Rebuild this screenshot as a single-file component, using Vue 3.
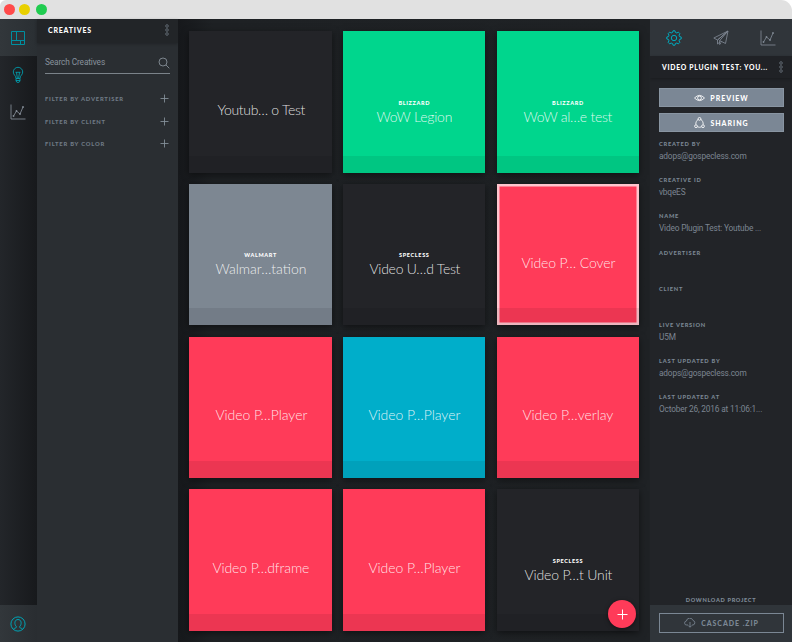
<script setup>
const tiles = [
  { title: 'Youtub… o Test', color: 'dark', w: 88 },
  { brand: 'BLIZZARD', title: 'WoW Legion', color: 'green', w: 76 },
  { brand: 'BLIZZARD', title: 'WoW al…e test', color: 'green', w: 89 },
  { brand: 'WALMART', title: 'Walmar…tation', color: 'gray', w: 91 },
  { brand: 'SPECLESS', title: 'Video U…d Test', color: 'dark', w: 91 },
  { title: 'Video P… Cover', color: 'red', selected: true, w: 94 },
  { title: 'Video P…Player', color: 'red', w: 92 },
  { title: 'Video P…Player', color: 'blue', w: 92 },
  { title: 'Video P…verlay', color: 'red', w: 91 },
  { title: 'Video P…dframe', color: 'red', w: 97 },
  { title: 'Video P…Player', color: 'red', w: 92 },
  { brand: 'SPECLESS', title: 'Video P…t Unit', color: 'dark', w: 88 },
]
const filters = ['FILTER BY ADVERTISER', 'FILTER BY CLIENT', 'FILTER BY COLOR']
const details = [
  { label: 'CREATED BY', value: 'adops@gospecless.com' },
  { label: 'CREATIVE ID', value: 'vbqeES' },
  { label: 'NAME', value: 'Video Plugin Test: Youtube ...' },
  { label: 'ADVERTISER', value: '' },
  { label: 'CLIENT', value: '' },
  { label: 'LIVE VERSION', value: 'U5M' },
  { label: 'LAST UPDATED BY', value: 'adops@gospecless.com' },
  { label: 'LAST UPDATED AT', value: 'October 26, 2016 at 11:06:1...' },
]
</script>

<template>
  <div class="window">
    <header class="titlebar">
      <i class="dot close"></i><i class="dot min"></i><i class="dot max"></i>
    </header>
    <div class="body">
      <nav class="rail">
        <div class="rail-item active">
          <svg width="16" height="16" viewBox="0 0 16 16"><path d="M1.500 1.500h13v13h-13zM6.500 1.500v9M1.500 10.500h13M10.500 10.500v4" /></svg>
        </div>
        <div class="rail-item">
          <svg width="12" height="18" viewBox="0 0 12 18"><path d="M4 12.500C4 9.500 1.300 9 1.300 6a4.700 4.700 0 0 1 9.400 0C10.700 9 8 9.500 8 12.500zM4 12.500v2.200q.3 1.800 2 1.800t2-1.800v-2.200M4 14.500h4M3.500 6.300h5M4.500 6.300L5.400 12.500M7.500 6.300L6.600 12.500" /></svg>
        </div>
        <div class="rail-item muted">
          <svg width="16" height="16" viewBox="0 0 16 16"><path d="M1 .5V15h14.500M3.500 12l3-5 3.500 3L13 3" /><g class="nodes"><circle cx="3.500" cy="12" r=".9" /><circle cx="6.500" cy="7" r=".9" /><circle cx="10" cy="10" r=".9" /><circle cx="13" cy="3" r=".9" /></g></svg>
        </div>
        <div class="rail-item user">
          <svg width="16" height="16" viewBox="0 0 16 16"><circle cx="8" cy="8" r="7.100" /><path d="M3.600 13c.8-1 2.900-.8 2.900-2.200C4 8.500 4.300 3.500 8 3.500s4 5 1.500 7.300c0 1.400 2.100 1.200 2.900 2.200" /></svg>
        </div>
      </nav>

      <aside class="filters">
        <div class="panel-head">
          <h2>CREATIVES</h2>
          <svg class="more" width="6" height="12" viewBox="0 0 6 12"><circle cx="3" cy="2" r="1.300" /><circle cx="3" cy="6" r="1.300" /><circle cx="3" cy="10" r="1.300" /></svg>
        </div>
        <div class="search">
          <span>Search Creatives</span>
          <svg width="12" height="12" viewBox="0 0 12 12"><circle cx="5" cy="5" r="4" /><path d="M8 8l3.300 3.300" /></svg>
        </div>
        <ul>
          <li v-for="f in filters" :key="f">
            <span>{{ f }}</span>
            <svg width="9" height="9" viewBox="0 0 9 9"><path d="M4.500.5v8M.5 4.500h8" /></svg>
          </li>
        </ul>
      </aside>

      <main class="board">
        <article v-for="(t, i) in tiles" :key="i" class="tile" :class="[t.color, { selected: t.selected }]">
          <div class="face" :class="{ branded: t.brand }">
            <small v-if="t.brand">{{ t.brand }}</small>
            <svg class="title" :width="t.w" height="17"><text x="0.4" y="13" :textLength="t.w" lengthAdjust="spacing">{{ t.title }}</text></svg>
          </div>
          <div class="strip"></div>
        </article>
        <button class="fab">
          <svg width="11" height="11" viewBox="0 0 11 11"><path d="M5.500.5v10M.5 5.500h10" /></svg>
        </button>
      </main>

      <aside class="inspector">
        <div class="tabs">
          <svg class="teal" width="16" height="16" viewBox="0 0 16 16"><path d="M6.600 2.400L7 .8h2l.4 1.600 1.500.6 1.400-.9 1.600 1.600-.9 1.400.6 1.500 1.600.4v2l-1.600.4-.6 1.500.9 1.400-1.600 1.600-1.400-.9-1.500.6L9 15.200H7l-.4-1.600-1.500-.6-1.400.9-1.600-1.600.9-1.400-.6-1.500L.8 9V7l1.600-.4L3 5.100l-.9-1.400 1.600-1.600 1.400.9z" stroke-linejoin="round" /><circle cx="8" cy="8" r="2.700" /></svg>
          <svg width="16" height="16" viewBox="0 0 16 16"><path d="M15 1L.8 8l3.700 2zM15 1L4.500 10v4l2.700-2.300M15 1L6.700 10.600v3.900l1.300-2M15 1l-2.500 12.500-5.800-2.900" stroke-linejoin="round" /></svg>
          <svg width="16" height="16" viewBox="0 0 16 16"><path d="M1 .5V15h14.500M3.500 12l3-5 3.500 3L13 3" /><g class="nodes"><circle cx="3.500" cy="12" r=".9" /><circle cx="6.500" cy="7" r=".9" /><circle cx="10" cy="10" r=".9" /><circle cx="13" cy="3" r=".9" /></g></svg>
        </div>
        <div class="panel-head right">
          <h2>VIDEO PLUGIN TEST: YOU...</h2>
          <svg class="more" width="6" height="12" viewBox="0 0 6 12"><circle cx="3" cy="2" r="1.300" /><circle cx="3" cy="6" r="1.300" /><circle cx="3" cy="10" r="1.300" /></svg>
        </div>
        <div class="actions">
          <button>
            <svg width="11" height="8" viewBox="0 0 11 8"><path d="M.5 4Q5.500-1.200 10.500 4 5.500 9.200.5 4z" /><circle cx="5.500" cy="4" r="1.900" /></svg>
            <span>PREVIEW</span>
          </button>
          <button>
            <svg width="11" height="12" viewBox="0 0 11 12"><path d="M4 2.500C2.500 3.500 1.700 5.500 1.800 7.500M7 2.500c1.500 1 2.300 3 2.200 5M3.400 9.800q2.100 1 4.200 0" /><circle cx="5.500" cy="1.900" r="1.400" /><circle cx="2" cy="9.200" r="1.400" /><circle cx="9" cy="9.200" r="1.400" /></svg>
            <span>SHARING</span>
          </button>
        </div>
        <dl>
          <div v-for="d in details" :key="d.label"><dt>{{ d.label }}</dt><dd>{{ d.value }}</dd></div>
        </dl>
        <p class="download">DOWNLOAD PROJECT</p>
        <footer>
          <button>
            <svg width="12" height="10" viewBox="0 0 12 10"><path d="M4 7H2.800a2 2 0 0 1-.4-4A3.400 3.400 0 0 1 9 2.500 2.300 2.300 0 0 1 9 7H8M6 4v5M4.300 7.500L6 9.300l1.700-1.800" /></svg>
            <span>CASCADE .ZIP</span>
          </button>
        </footer>
      </aside>
    </div>
  </div>
</template>

<style>
body { margin: 0; background: #fff; overflow: hidden; }
</style>

<style scoped>
* { box-sizing: border-box; }
.window { width: 792px; height: 642px; display: flex; flex-direction: column; font-family: Lato, sans-serif; color: #7f8b98; overflow: hidden; }
h2, p, ul, dl, dd { margin: 0; padding: 0; }
svg { display: block; flex: none; fill: none; stroke: currentColor; stroke-width: .85; }
button { border: 0; padding: 0; font-family: Lato, sans-serif; display: flex; align-items: center; justify-content: center; }
.titlebar { height: 19px; flex: none; background: #e1e1e1; border-radius: 6px 11px 0 0; display: flex; align-items: center; gap: 4.500px; padding-left: 4px; }
.dot { width: 11px; height: 11px; border-radius: 50%; }
.close { background: #ff4a4a; }
.min { background: #e9d000; margin-left: -.5px; }
.max { background: #20cc50; margin-left: 1px; }
.body { flex: 1; display: flex; min-height: 0; background: #1f2225; }

.rail { width: 37px; flex: none; display: flex; flex-direction: column; background: linear-gradient(90deg, #23262a, #17191c); color: #00a3b4; }
.rail-item { height: 37px; padding-right: 1px; display: flex; align-items: center; justify-content: center; }
.rail-item.active { background: linear-gradient(90deg, #32373b, #2a2f33); }
.rail-item.active svg { stroke-width: 1; color: #008fa0; }
.rail-item.muted { color: #858e98; }
.rail-item.user { margin-top: auto; background: linear-gradient(90deg, #32373b, #292d31); }
.rail-item.user svg { stroke-width: 1; }
.nodes { fill: currentColor; stroke: none; }

.filters { width: 141px; flex: none; background: #2a2e32; }
.panel-head { height: 24px; display: flex; align-items: center; justify-content: space-between; padding: 0 8px 2px 11px; background: #222528; box-shadow: 0 1px 3px rgba(0, 0, 0, .25); }
.panel-head h2 { font-size: 7px; line-height: 10px; font-weight: 900; letter-spacing: .8px; color: #fff; white-space: nowrap; }
.more { color: #68717b; }
.search { margin: 6px 8px 0; height: 25px; border-bottom: 1px solid #7b838a; display: flex; align-items: center; justify-content: space-between; font: 8.300px/12px Roboto, sans-serif; letter-spacing: -.12px; color: #87919c; }
.search svg { color: #8a939d; margin-top: 3px; }
.search span { padding-top: 2px; }
ul { list-style: none; padding: 13.400px 9px 0 8px; }
li { height: 22.600px; display: flex; align-items: center; justify-content: space-between; font-size: 5.800px; font-weight: 900; letter-spacing: .8px; color: #6f7a85; white-space: nowrap; }
li svg { color: #87929d; }

.board { position: relative; flex: 1; display: grid; grid-template-columns: repeat(3, 142.400px); grid-auto-rows: 141.700px; gap: 11.100px 11.300px; padding: 12px 0 0 11.400px; overflow: hidden; background: linear-gradient(90deg, #16181b 0, #1e2124 35px, #1f2225 100%); }
.tile { display: flex; flex-direction: column; color: #fff; box-shadow: 0 2px 7px rgba(0, 0, 0, .5); }
.face { flex: 1; display: flex; flex-direction: column; align-items: center; justify-content: center; padding-top: 34px; }
.branded { padding-top: 35.500px; }
.face small { font-size: 5.500px; line-height: 12px; font-weight: 900; letter-spacing: .65px; }
.title { overflow: visible; stroke: none; fill: rgba(255, 255, 255, .86); font-size: 14px; font-weight: 300; }
.strip { height: 17px; background: rgba(0, 0, 0, .075); }
.dark { background: #232428; }
.dark .strip { background: rgba(0, 0, 0, .06); }
.green { background: #00d68d; }
.gray { background: #7d8792; }
.red { background: #ff3b59; }
.blue { background: #00aeca; }
.selected { box-shadow: inset 0 0 0 2.500px #ffc5ce, 0 2px 7px rgba(0, 0, 0, .5); }
.fab { position: absolute; right: 14px; bottom: 14px; width: 28px; height: 28px; border-radius: 50%; background: #ff3b59; color: #fff; box-shadow: 0 1px 4px rgba(0, 0, 0, .5); }
.fab svg { stroke-width: 1; }

.inspector { width: 142px; flex: none; background: #222428; display: flex; flex-direction: column; }
.tabs { height: 37px; flex: none; background: #30353a; display: flex; align-items: center; justify-content: space-between; padding: 0 16px; color: #7f8893; }
.teal { color: #00abbe; stroke-width: 1; }
.right { height: 22px; flex: none; padding: 0 8px 0 12px; background: #202226; }
.right h2 { font-size: 6.800px; letter-spacing: .74px; }
.actions { padding: 10px 8px 0 9px; display: flex; flex-direction: column; gap: 6px; }
.actions button { height: 19px; gap: 5px; background: #7b8795; color: #fff; border: 1px solid #8995a2; font-size: 7px; font-weight: 900; letter-spacing: .98px; }
dl { padding: 6.100px 0 0 9px; }
dl > div { height: 36.200px; white-space: nowrap; }
dt { font-size: 5.700px; line-height: 12px; font-weight: 900; letter-spacing: .76px; color: #7b8794; }
dd { font: 8.300px/13px Roboto, sans-serif; letter-spacing: -.17px; color: #7c8591; }
.download { margin-top: auto; font-size: 5.600px; line-height: 11px; font-weight: 900; letter-spacing: .67px; text-align: center; }
footer { height: 37px; flex: none; background: #30353a; padding: 8px 8px 0 9px; }
footer button { width: 100%; height: 20px; gap: 5px; background: transparent; border: 1px solid #7b8794; color: #7b8794; font-size: 7px; font-weight: 900; letter-spacing: .95px; }
</style>
